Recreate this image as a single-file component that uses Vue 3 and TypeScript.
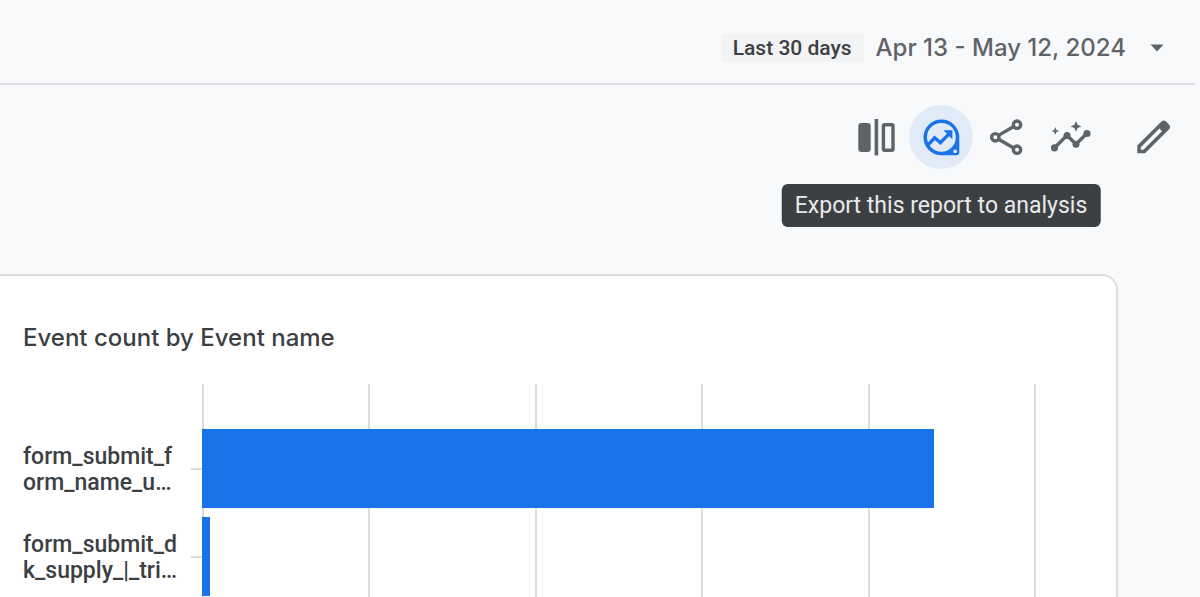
<script setup lang="ts">
interface EventRow {
  lines: [string, string]
  share: number
}

const rows: EventRow[] = [
  { lines: ['form_submit_f', 'orm_name_u…'], share: 87.8 },
  { lines: ['form_submit_d', 'k_supply_|_tri…'], share: 1 },
]

const gridLines = 6
</script>

<template>
  <main class="page">
    <header class="topbar">
      <button class="date-picker" type="button" aria-haspopup="dialog">
        <span class="preset">Last 30 days</span>
        <span class="range">Apr 13 - May 12, 2024</span>
        <svg class="caret" viewBox="0 0 14 8" aria-hidden="true"><path d="M0.5 0.5h13L7 7.5z" /></svg>
      </button>
    </header>

    <div class="toolbar" role="toolbar" aria-label="Report actions">
      <button class="tool" type="button" aria-label="Edit comparisons">
        <svg viewBox="0 0 64 64" aria-hidden="true">
          <rect x="14.3" y="18" width="12.4" height="29" rx="3" />
          <rect x="30.6" y="14" width="3.6" height="36.4" />
          <rect class="line" x="39.4" y="19.7" width="9.6" height="25.6" rx="1.2" />
        </svg>
      </button>
      <div class="tool-wrap">
        <button class="tool active" type="button" aria-describedby="export-tip" aria-label="Export">
          <svg viewBox="0 0 64 64" aria-hidden="true">
            <path
              fill-rule="evenodd"
              d="M32.4 14.4A17.9 17.9 0 0 1 50.3 32.3V47.3A3 3 0 0 1 47.3 50.3H32.4A17.9 17.9 0 0 1 32.4 14.4ZM32.4 17.9A14.4 14.4 0 1 0 32.4 46.7A14.4 14.4 0 1 0 32.4 17.9ZM46.1 44.4A1.9 1.9 0 1 0 46.1 48.2A1.9 1.9 0 1 0 46.1 44.4Z"
            />
            <path class="line" d="M18.6 40.4L25.6 32.8L31.4 37.6L40.6 28.4" />
            <path d="M34.3 25.2H43.4V34.3L40.8 31.7L38.2 29.1Z" />
          </svg>
        </button>
        <span id="export-tip" class="tooltip" role="tooltip">Export this report to analysis</span>
      </div>
      <button class="tool" type="button" aria-label="Share this report">
        <svg viewBox="0 0 64 64" aria-hidden="true">
          <path class="line" d="M24.5 30.4L39.8 21.5M24.5 34.2L39.8 42.9" />
          <circle class="line" cx="21.3" cy="32.3" r="3.7" />
          <circle class="line" cx="43" cy="19.7" r="3.7" />
          <circle class="line" cx="43" cy="44.7" r="3.7" />
        </svg>
      </button>
      <button class="tool" type="button" aria-label="Insights">
        <svg viewBox="0 0 64 64" aria-hidden="true">
          <path class="line" d="M15.3 43L28 30.3L37 39.3L48 28.3" />
          <circle cx="15.5" cy="42.8" r="3.6" />
          <circle cx="28" cy="30.6" r="3.5" />
          <circle cx="37" cy="39.2" r="3.5" />
          <circle cx="48" cy="28.5" r="3.6" />
          <path d="M37 16L38.6 19.8L42.4 21.4L38.6 23L37 26.8L35.4 23L31.6 21.4L35.4 19.8Z" />
          <path d="M16.3 22L17.4 24.9L20.3 26L17.4 27.1L16.3 30L15.2 27.1L12.3 26L15.2 24.9Z" />
        </svg>
      </button>
      <button class="tool edit" type="button" aria-label="Customize report">
        <svg viewBox="0 0 64 64" aria-hidden="true">
          <path
            fill-rule="evenodd"
            d="M15.3 48.2V40.6L39.7 16.3Q41.7 14.7 43.8 16.3L47.4 19.9Q49 22 47.4 24L23 48.2ZM18.8 44.8H21.4L40 26.2L37.4 23.6L18.8 42.2Z"
          />
        </svg>
      </button>
    </div>

    <section class="card" aria-labelledby="chart-title">
      <h2 id="chart-title" class="title">Event count by Event name</h2>
      <div class="chart">
        <div class="grid" aria-hidden="true">
          <i v-for="n in gridLines" :key="n"></i>
        </div>
        <ul class="rows">
          <li v-for="row in rows" :key="row.lines[0]" class="row">
            <span class="label">{{ row.lines[0] }}<br />{{ row.lines[1] }}</span>
            <span class="tick"></span>
            <span class="track"><span class="bar" :style="{ width: row.share + '%' }"></span></span>
          </li>
        </ul>
      </div>
    </section>
  </main>
</template>

<style>
body {
  margin: 0;
}
</style>

<style scoped>
.page {
  display: flex;
  flex-direction: column;
  box-sizing: border-box;
  height: 100vh;
  overflow: hidden;
  background: #f8f9fb;
  color: #3c4043;
  font-family: Roboto, "Liberation Sans", sans-serif;
}

button {
  margin: 0;
  padding: 0;
  border: 0;
  background: none;
  color: inherit;
  font: inherit;
  cursor: pointer;
}

.topbar {
  display: flex;
  justify-content: flex-end;
  margin-right: 5px;
  padding: 32px 31px 20px 0;
  border-bottom: 2px solid #dadce0;
}

.date-picker {
  display: flex;
  align-items: center;
  height: 31px;
}

.preset {
  padding: 0 12px;
  background: #f1f3f4;
  font-size: 21px;
  font-weight: 500;
  line-height: 28px;
}

.range {
  margin: 0 24px 0 12px;
  color: #5f6368;
  font-family: Inter, Roboto, sans-serif;
  font-size: 24px;
  font-weight: 500;
  line-height: 30px;
}

.caret {
  width: 14px;
  height: 8px;
  fill: #5f6368;
}

.toolbar {
  display: flex;
  justify-content: flex-end;
  gap: 1px;
  padding: 20px 14px 105px 0;
}

.tool-wrap {
  position: relative;
}

.tool {
  display: block;
  width: 64px;
  height: 64px;
  border-radius: 50%;
  color: #5f6368;
}

.tool svg {
  display: block;
  width: 64px;
  height: 64px;
  fill: currentColor;
}

.tool .line {
  fill: none;
  stroke: currentColor;
  stroke-width: 3.4;
}

.tool.active {
  background: #e1ebf8;
  color: #1a73e8;
}

.edit {
  margin-left: 18px;
}

.tooltip {
  position: absolute;
  top: 79px;
  left: 50%;
  transform: translateX(-50%);
  padding: 0 13px;
  border-radius: 6px;
  background: #3c4043;
  color: #e8eaed;
  font-size: 23px;
  line-height: 43px;
  white-space: nowrap;
}

.card {
  display: flex;
  flex: 1;
  flex-direction: column;
  min-height: 0;
  margin-right: 82px;
  padding-left: 23px;
  border-top: 2px solid #dadce0;
  border-right: 2px solid #dadce0;
  border-top-right-radius: 16px;
  background: #fff;
}

.title {
  margin: 46px 0 30px;
  font-family: Inter, Roboto, sans-serif;
  font-size: 24px;
  font-weight: 500;
  line-height: 32px;
}

.chart {
  display: grid;
  flex: 1;
  grid-template-columns: 179px 1fr;
  margin-right: 80px;
}

.grid {
  display: flex;
  grid-area: 1 / 2;
  justify-content: space-between;
}

.grid i {
  width: 2px;
  background: #dadce0;
}

.rows {
  display: flex;
  grid-area: 1 / 1 / 2 / 3;
  flex-direction: column;
  gap: 9px;
  margin: 0;
  padding: 45px 0 0;
  list-style: none;
}

.row {
  display: grid;
  grid-template-columns: 168px 11px 1fr;
  align-items: center;
  height: 79px;
}

.label {
  padding-top: 2px;
  font-size: 23px;
  font-weight: 500;
  line-height: 26px;
}

.tick {
  height: 2px;
  background: #dadce0;
}

.track {
  height: 100%;
}

.bar {
  display: block;
  height: 100%;
  background: #1a73e8;
}
</style>
